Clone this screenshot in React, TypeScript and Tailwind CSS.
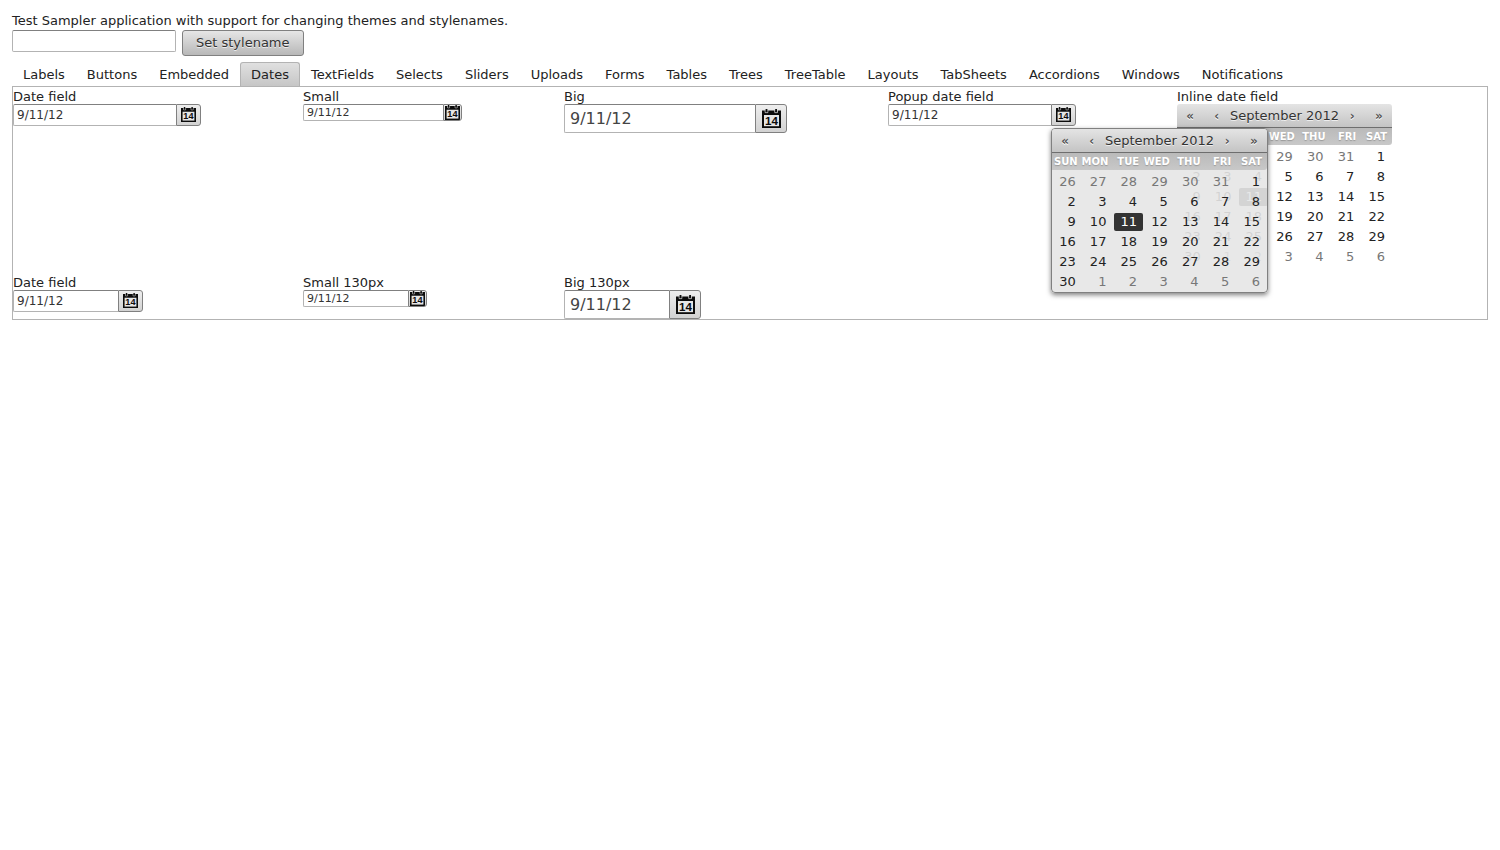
import React from "react";

const TABS = [
  "Labels", "Buttons", "Embedded", "Dates", "TextFields", "Selects", "Sliders", "Uploads", "Forms",
  "Tables", "Trees", "TreeTable", "Layouts", "TabSheets", "Accordions", "Windows", "Notifications",
];

const WEEKDAYS = ["SUN", "MON", "TUE", "WED", "THU", "FRI", "SAT"];

// Six weeks starting on Sunday, August 26th 2012.
const WEEKS = Array.from({ length: 6 }, (_, week) =>
  Array.from({ length: 7 }, (_, day) => {
    const date = new Date(2012, 7, 26 + week * 7 + day);
    return { day: date.getDate(), current: date.getMonth() === 8 };
  }),
);

type Size = "normal" | "small" | "big";

function CalendarIcon({ className }: { className: string }) {
  return (
    <svg viewBox="0 0 19 19" className={className} aria-hidden="true">
      <path d="M0 1.4h19V19H0z" fill="#0c0c0c" />
      <path d="M3.2 0.6v3h2.6v-3M12.8 0.6v3h2.6v-3" fill="none" stroke="#dcdcdc" strokeWidth="0.9" />
      <path d="M3.6 0h1.8v3.2H3.6zM13.2 0h1.8v3.2h-1.8z" fill="#0c0c0c" />
      <rect x="2" y="6" width="15" height="11.2" fill="#e6e6e6" />
      <text x="9.4" y="15.6" textAnchor="middle" fontSize="11.6" fontWeight="bold" fontFamily="Liberation Sans, sans-serif" fill="#0c0c0c">
        14
      </text>
    </svg>
  );
}

const FIELD: Record<Size, string> = {
  normal: "h-[22px] px-[3px] text-[12px] text-[#333]",
  small: "h-[17px] px-[3px] text-[11px] text-[#333]",
  big: "h-[29px] px-[5px] text-[16px] text-[#444]",
};

const TRIGGER: Record<Size, string> = {
  normal: "w-[25px] pb-px",
  small: "w-[19px]",
  big: "w-8 pb-px",
};

const ICON: Record<Size, string> = { normal: "size-[15px]", small: "size-[15px]", big: "size-[19px]" };

function DateField({ id, label, size = "normal", width, children }: {
  id: string;
  label: string;
  size?: Size;
  width: string;
  children?: React.ReactNode;
}) {
  return (
    <div>
      <label htmlFor={id} className="block h-[14px] leading-[14px]">{label}</label>
      <div className="relative flex w-fit">
        <input
          id={id}
          type="text"
          defaultValue="9/11/12"
          className={`${FIELD[size]} ${width} rounded-l-[2px] border border-r-0 border-[#b3b3b3] border-t-[#808080] bg-white outline-none`}
        />
        <button
          type="button"
          aria-label="Open calendar"
          className={`${TRIGGER[size]} flex items-center justify-center overflow-hidden rounded-r-[3px] border border-[#808080] bg-linear-to-b from-[#eeeeee] to-[#d2d2d2]`}
        >
          <CalendarIcon className={`${ICON[size]} shrink-0`} />
        </button>
        {children}
      </div>
    </div>
  );
}

const NAV = "w-7 text-[12px] font-bold text-[#555] [text-shadow:0_1px_0_#fff]";

function Calendar({ selected }: { selected: number }) {
  return (
    <div className="w-[215px]">
      <div className="flex h-6 items-center rounded-t-[3px] border-b border-[#6e6e6e] bg-linear-to-b from-[#e4e4e4] to-[#c4c4c4]">
        <button type="button" aria-label="Previous year" className={NAV}>«</button>
        <button type="button" aria-label="Previous month" className={NAV}>‹</button>
        <span className="flex grow basis-0 justify-center whitespace-nowrap text-[#333] [text-shadow:0_1px_0_#eee]">September 2012</span>
        <button type="button" aria-label="Next month" className={NAV}>›</button>
        <button type="button" aria-label="Next year" className={NAV}>»</button>
      </div>
      <table className="w-full table-fixed border-collapse text-right">
        <thead>
          <tr>
            {WEEKDAYS.map((name) => (
              <th
                key={name}
                className="h-[17px] bg-linear-to-b from-[#bababa] to-[#c8c8c8] p-0 pr-[5px] text-[10px] leading-[16px] font-bold text-white [text-shadow:0_1px_1px_#999] last:rounded-br-[3px]"
              >
                <span className="float-right">{name}</span>
              </th>
            ))}
          </tr>
        </thead>
        <tbody>
          {WEEKS.map((week, w) => (
            <tr key={w}>
              {week.map(({ day, current }) => {
                const isSelected = current && day === selected;
                return (
                  <td key={day} className={`${w === 0 ? "h-[22px]" : "h-5"} px-px pt-0 pb-px align-bottom`}>
                    <div
                      className={`h-[18px] rounded-[2px] pr-[6px] leading-[18px] ${
                        isSelected ? "bg-[#333] text-white" : current ? "text-[#222]" : "text-[#777]"
                      }`}
                    >
                      {day}
                    </div>
                  </td>
                );
              })}
            </tr>
          ))}
        </tbody>
      </table>
    </div>
  );
}

export default function App() {
  return (
    <main className="p-3 font-['DejaVu_Sans',sans-serif] text-[13px] text-[#222]">
      <p className="h-[18px] leading-[17px]">Test Sampler application with support for changing themes and stylenames.</p>
      <form className="flex items-start gap-[6px]" onSubmit={(e) => e.preventDefault()}>
        <input
          type="text"
          aria-label="Stylename"
          className="h-[22px] w-[164px] rounded-[2px] border border-[#b3b3b3] border-t-[#808080] bg-white px-1 outline-none"
        />
        <button
          type="submit"
          className="h-[26px] rounded-[3px] border border-[#808080] bg-linear-to-b from-[#e6e6e6] to-[#b8b8b8] px-[13px] text-[#333] [text-shadow:0_1px_0_#eee]"
        >
          Set stylename
        </button>
      </form>
      <div role="tablist" className="mt-[6px] flex">
        {TABS.map((tab) => (
          <button
            key={tab}
            type="button"
            role="tab"
            aria-selected={tab === "Dates"}
            className={`h-6 rounded-t-[3px] border border-b-0 px-[10px] whitespace-nowrap ${
              tab === "Dates" ? "border-[#b3b3b3] bg-linear-to-b from-[#e0e0e0] to-[#c6c6c6]" : "border-transparent"
            }`}
          >
            {tab}
          </button>
        ))}
      </div>
      <section className="grid grid-cols-[290fr_261fr_324fr_289fr_310fr] items-start border border-[#b3b3b3] pt-[3px]">
        <DateField id="date" label="Date field" width="w-[163px]" />
        <DateField id="date-small" label="Small" size="small" width="w-[140px]" />
        <DateField id="date-big" label="Big" size="big" width="w-[191px]" />
        <DateField id="date-popup" label="Popup date field" width="w-[163px]">
          <div className="absolute top-full left-[163px] z-10 mt-[2px] rounded-[4px] border border-[#808080] bg-[#e6e6e6]/90 shadow-[0_2px_5px_rgba(0,0,0,0.5)]">
            <Calendar selected={11} />
          </div>
        </DateField>
        <div className="pb-[9px]">
          <div className="h-[14px] leading-[14px]">Inline date field</div>
          <Calendar selected={11} />
        </div>
        <DateField id="date-130" label="Date field" width="w-[105px]" />
        <DateField id="date-small-130" label="Small 130px" size="small" width="w-[105px]" />
        <DateField id="date-big-130" label="Big 130px" size="big" width="w-[105px]" />
      </section>
    </main>
  );
}
